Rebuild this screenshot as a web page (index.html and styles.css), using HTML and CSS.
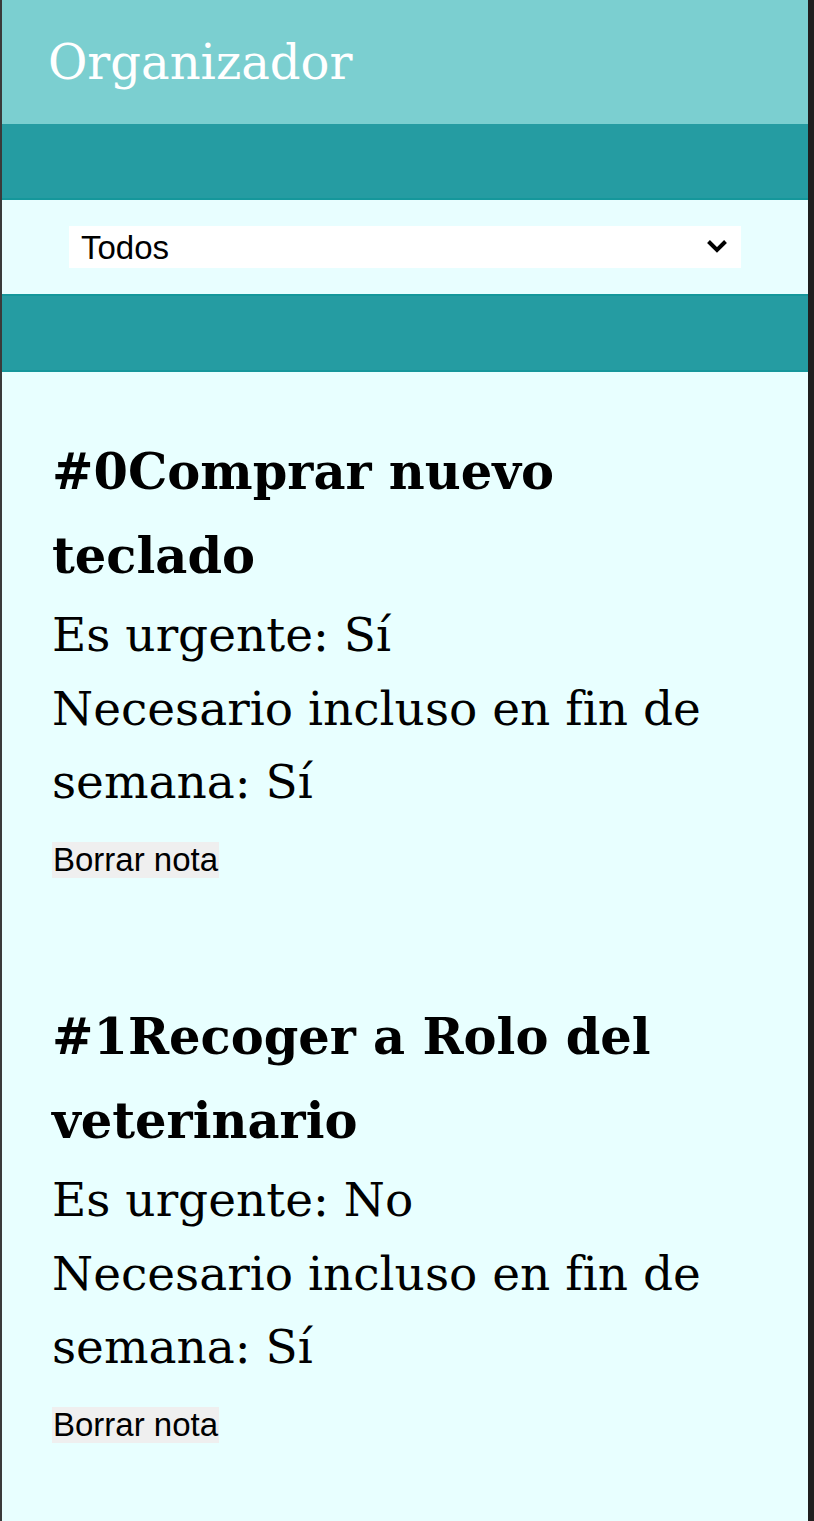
FILE: index.html
```html
<!DOCTYPE html>
<html lang="es">
<head>
<meta charset="utf-8">
<title>Organizador</title>
<link rel="stylesheet" href="styles.css">
</head>
<body>
<div class="frame">
  <header class="top">
    <h1 class="title">Organizador</h1>
  </header>
  <div class="band"></div>
  <section class="filter">
    <div class="select-wrap">
      <select class="select">
        <option>Todos</option>
        <option>Urgentes</option>
        <option>Fin de semana</option>
      </select>
      <svg class="chev" width="22" height="14" viewBox="0 0 22 14" aria-hidden="true"><path d="M2.5 2.5 L11 11 L19.5 2.5" fill="none" stroke="#000" stroke-width="4" stroke-linejoin="miter"/></svg>
    </div>
  </section>
  <div class="band band-second"></div>
  <main class="notes">
    <article class="note">
      <h2 class="note-title">#0Comprar nuevo teclado</h2>
      <p class="note-line">Es urgente: Sí</p>
      <p class="note-line">Necesario incluso en fin de semana: Sí</p>
      <button class="delete">Borrar nota</button>
    </article>
    <article class="note">
      <h2 class="note-title">#1Recoger a Rolo del veterinario</h2>
      <p class="note-line">Es urgente: No</p>
      <p class="note-line">Necesario incluso en fin de semana: Sí</p>
      <button class="delete">Borrar nota</button>
    </article>
  </main>
</div>
</body>
</html>
```

FILE: styles.css
```css
html, body {
  margin: 0;
  padding: 0;
  background: #1f1f1f;
}

.frame {
  box-sizing: border-box;
  width: 814px;
  min-height: 1521px;
  border-left: 2px solid #3a3a3a;
  border-right: 6px solid #1f1f1f;
  background: #e8ffff;
  display: flex;
  flex-direction: column;
  font-family: "DejaVu Serif", serif;
}

.top {
  height: 124px;
  background: #7bcfd0;
  padding-left: 46px;
}

.title {
  margin: 0;
  font-family: "DejaVu Serif", serif;
  font-weight: normal;
  font-size: 48px;
  line-height: 124px;
  color: #ffffff;
}

.band {
  box-sizing: border-box;
  height: 76px;
  background: #259ca2;
  border-bottom: 2px solid #15979b;
}

.band-second {
  height: 78px;
  border-top: 2px solid #15979b;
}

.filter {
  background: #e8feff;
  padding: 26px 67px;
}

.select-wrap {
  position: relative;
  height: 42px;
}

.select {
  display: block;
  width: 100%;
  height: 42px;
  margin: 0;
  padding: 0 12px;
  border: none;
  background: #ffffff;
  appearance: none;
  -webkit-appearance: none;
  font-family: "Liberation Sans", Arial, sans-serif;
  font-size: 33px;
  color: #000;
}

.chev {
  position: absolute;
  right: 13px;
  top: 13px;
}

.notes {
  flex: 1;
  padding: 58px 50px 0 50px;
}

.note {
  margin-bottom: 117px;
}

.note-title {
  margin: 0;
  font-family: "DejaVu Serif", serif;
  font-weight: bold;
  font-size: 49.5px;
  line-height: 84px;
  color: #000;
}

.note-line {
  margin: 0;
  font-size: 47px;
  line-height: 73.5px;
  color: #000;
}

.delete {
  display: block;
  margin-top: 23.5px;
  height: 36px;
  padding: 0 1px;
  border: none;
  background: #efefef;
  font-family: "Liberation Sans", Arial, sans-serif;
  font-size: 33px;
  line-height: 36px;
  color: #000;
}
```
